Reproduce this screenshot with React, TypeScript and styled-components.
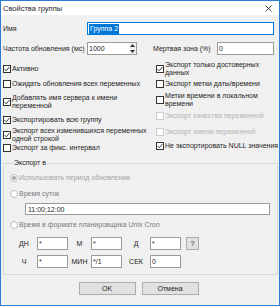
import React from "react";
import styled, { createGlobalStyle } from "styled-components";

const GlobalStyle = createGlobalStyle`
  html, body {
    margin: 0;
    padding: 0;
    background: #ffffff;
  }
  body {
    font-family: "Liberation Sans", Arial, sans-serif;
    font-size: 7px;
    color: #1e1e1e;
  }
`;

const Window = styled.div`
  width: 280px;
  height: 306px;
  box-sizing: border-box;
  border: 1px solid #2b7cd3;
  background: #f0f0f0;
  display: flex;
  flex-direction: column;
  overflow: hidden;
`;

const TitleBar = styled.div`
  height: 14px;
  flex: none;
  background: #ffffff;
  display: flex;
  align-items: center;
  justify-content: space-between;
  padding: 0 7px 0 2px;
  font-size: 7.5px;
`;

const Body = styled.div`
  display: flex;
  flex-direction: column;
  padding: 7px 5px 0 2px;
`;

const FieldRow = styled.div<{ $mt?: number }>`
  display: flex;
  align-items: center;
  height: 13px;
  margin-top: ${(p) => p.$mt ?? 0}px;
`;

const FieldLabel = styled.div<{ $w: number; $ml?: number }>`
  width: ${(p) => p.$w}px;
  margin-left: ${(p) => p.$ml ?? 0}px;
  flex: none;
  white-space: nowrap;
`;

const Field = styled.div<{ $w?: number; $focus?: boolean }>`
  box-sizing: border-box;
  height: 13px;
  width: ${(p) => (p.$w ? `${p.$w}px` : "auto")};
  flex: ${(p) => (p.$w ? "none" : "1")};
  border: 1px solid ${(p) => (p.$focus ? "#0078d7" : "#9a9a9a")};
  background: #ffffff;
  padding: 0 1px;
  display: flex;
  align-items: center;
  white-space: nowrap;
  overflow: hidden;
`;

const Selected = styled.span`
  background: #0078d7;
  color: #ffffff;
  padding: 0 1px;
  line-height: 10px;
`;

const Spinner = styled.div`
  box-sizing: border-box;
  width: 50px;
  height: 13px;
  flex: none;
  border: 1px solid #9a9a9a;
  background: #ffffff;
  display: flex;
  align-items: center;
  padding-left: 1px;
`;

const SpinText = styled.span`
  flex: 1;
`;

const SpinArrows = styled.div`
  width: 7px;
  height: 11px;
  display: flex;
  flex-direction: column;
  justify-content: space-around;
  align-items: center;
  background: #f0f0f0;
`;

const CheckGrid = styled.div`
  display: grid;
  grid-template-columns: 153px 1fr;
`;

const CheckColumn = styled.div<{ $pt: number }>`
  display: flex;
  flex-direction: column;
  padding-top: ${(p) => p.$pt}px;
`;

const CheckItem = styled.div<{ $mt?: number; $disabled?: boolean }>`
  display: flex;
  align-items: center;
  gap: 1px;
  margin-top: ${(p) => p.$mt ?? 0}px;
  color: ${(p) => (p.$disabled ? "#b4b4b4" : "inherit")};
  line-height: 8px;
  white-space: nowrap;
`;

const Box = styled.span<{ $disabled?: boolean }>`
  box-sizing: border-box;
  width: 8px;
  height: 8px;
  flex: none;
  border: 1px solid ${(p) => (p.$disabled ? "#cccccc" : "#333333")};
  background: #ffffff;
  display: flex;
  align-items: center;
  justify-content: center;
`;

const Group = styled.fieldset`
  margin: 7px -4px 0 0;
  padding: 0 6px 6px 6px;
  border: 1px solid #d8d8d8;
  display: flex;
  flex-direction: column;
`;

const Legend = styled.legend`
  margin-left: 3px;
  padding: 0 1px;
  line-height: 8px;
`;

const RadioItem = styled.div<{ $mt: number; $tone: string }>`
  display: flex;
  align-items: center;
  gap: 1px;
  margin-top: ${(p) => p.$mt}px;
  color: ${(p) => p.$tone};
  line-height: 8px;
  white-space: nowrap;
`;

const RadioCircle = styled.span`
  box-sizing: border-box;
  width: 8px;
  height: 8px;
  flex: none;
  border-radius: 50%;
  border: 1px solid #bcbcbc;
  background: #ffffff;
  display: flex;
  align-items: center;
  justify-content: center;
`;

const RadioDot = styled.span`
  width: 4px;
  height: 4px;
  border-radius: 50%;
  background: #a6a6a6;
`;

const TimeField = styled(Field)`
  margin: 5px 0 0 15px;
  flex: none;
  height: 12px;
  padding-left: 2px;
`;

const CronGrid = styled.div`
  display: grid;
  grid-template-columns: 20px 31px 17px 31px 22px 31px 15px;
  grid-auto-rows: 13px;
  column-gap: 3px;
  row-gap: 5px;
  margin: 8px 0 0 4px;
  align-items: center;
`;

const CronLabel = styled.div`
  text-align: center;
  white-space: nowrap;
`;

const HelpButton = styled.div`
  box-sizing: border-box;
  width: 13px;
  height: 13px;
  margin-left: 2px;
  border: 1px solid #adadad;
  background: #e1e1e1;
  display: flex;
  align-items: center;
  justify-content: center;
`;

const ButtonRow = styled.div`
  display: flex;
  justify-content: center;
  gap: 6px;
  margin-top: 7px;
`;

const DialogButton = styled.div`
  box-sizing: border-box;
  width: 57px;
  height: 13px;
  border: 1px solid #adadad;
  background: #e1e1e1;
  display: flex;
  align-items: center;
  justify-content: center;
`;

const CheckMark = () => (
  <svg width="6" height="6" viewBox="0 0 6 6">
    <path d="M0.6 3.1 L2.3 4.8 L5.4 1" fill="none" stroke="#222" strokeWidth="0.9" />
  </svg>
);

interface CheckProps {
  checked?: boolean;
  disabled?: boolean;
  mt?: number;
  lines: string[];
}

const Check = ({ checked, disabled, mt, lines }: CheckProps) => (
  <CheckItem $mt={mt} $disabled={disabled}>
    <Box $disabled={disabled}>{checked && <CheckMark />}</Box>
    <span>
      {lines.map((l, i) => (
        <React.Fragment key={i}>
          {i > 0 && <br />}
          {l}
        </React.Fragment>
      ))}
    </span>
  </CheckItem>
);

const Radio = ({ checked, mt, tone, text }: { checked?: boolean; mt: number; tone: string; text: string }) => (
  <RadioItem $mt={mt} $tone={tone}>
    <RadioCircle>{checked && <RadioDot />}</RadioCircle>
    <span>{text}</span>
  </RadioItem>
);

const App = () => {
  return (
    <>
      <GlobalStyle />
      <Window>
        <TitleBar>
          <span>Свойства группы</span>
          <svg width="7" height="7" viewBox="0 0 7 7">
            <path d="M0.5 0.5 L6.5 6.5 M6.5 0.5 L0.5 6.5" stroke="#111" strokeWidth="0.8" />
          </svg>
        </TitleBar>
        <Body>
          <FieldRow>
            <FieldLabel $w={84}>Имя</FieldLabel>
            <Field $focus>
              <Selected>Группа 2</Selected>
            </Field>
          </FieldRow>
          <FieldRow $mt={7}>
            <FieldLabel $w={84}>Частота обновления (мс)</FieldLabel>
            <Spinner>
              <SpinText>1000</SpinText>
              <SpinArrows>
                <svg width="5" height="3" viewBox="0 0 5 3">
                  <path d="M0 3 L2.5 0 L5 3 Z" fill="#333" />
                </svg>
                <svg width="5" height="3" viewBox="0 0 5 3">
                  <path d="M0 0 L2.5 3 L5 0 Z" fill="#333" />
                </svg>
              </SpinArrows>
            </Spinner>
            <FieldLabel $w={64} $ml={16}>
              Мертвая зона (%)
            </FieldLabel>
            <Field>0</Field>
          </FieldRow>
          <CheckGrid>
            <CheckColumn $pt={10}>
              <Check checked lines={["Активно"]} />
              <Check mt={7} lines={["Ожидать обновления всех переменных"]} />
              <Check checked mt={6} lines={["Добавлять имя сервера к имени", "переменной"]} />
              <Check checked mt={6} lines={["Экспортировать всю группу"]} />
              <Check checked mt={3} lines={["Экспорт всех изменившихся переменных", "одной строкой"]} />
              <Check mt={1} lines={["Экспорт за фикс. интервал"]} />
            </CheckColumn>
            <CheckColumn $pt={6}>
              <Check checked lines={["Экспорт только достоверных", "данных"]} />
              <Check mt={3} lines={["Экспорт метки даты/времени"]} />
              <Check mt={4} lines={["Метки времени в локальном", "времени"]} />
              <Check disabled mt={4} lines={["Экспорт качества переменной"]} />
              <Check disabled mt={8} lines={["Экспорт имени переменной"]} />
              <Check checked mt={6} lines={["Не экспортировать NULL значения"]} />
            </CheckColumn>
          </CheckGrid>
          <Group>
            <Legend>Экспорт в</Legend>
            <Radio checked mt={7} tone="#a3a3a3" text="Использовать период обновления" />
            <Radio mt={8} tone="#7a7a7a" text="Время суток" />
            <TimeField $w={245}>11:00;12:00</TimeField>
            <Radio mt={6} tone="#7a7a7a" text="Время в формате планировщика Unix Cron" />
            <CronGrid>
              <CronLabel>ДН</CronLabel>
              <Field>*</Field>
              <CronLabel>М</CronLabel>
              <Field>*</Field>
              <CronLabel>Д</CronLabel>
              <Field>*</Field>
              <HelpButton>?</HelpButton>
              <CronLabel>Ч</CronLabel>
              <Field>*</Field>
              <CronLabel>МИН</CronLabel>
              <Field>*/1</Field>
              <CronLabel>СЕК</CronLabel>
              <Field>0</Field>
            </CronGrid>
          </Group>
          <ButtonRow>
            <DialogButton>OK</DialogButton>
            <DialogButton>Отмена</DialogButton>
          </ButtonRow>
        </Body>
      </Window>
    </>
  );
};

export default App;
